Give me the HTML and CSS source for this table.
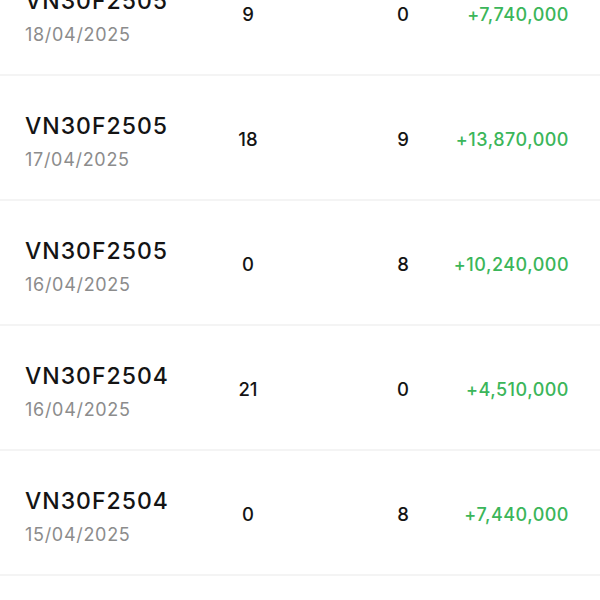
FILE: index.html
```html
<!DOCTYPE html>
<html lang="vi">
<head>
<meta charset="utf-8">
<title>Lịch sử giao dịch</title>
<link rel="stylesheet" href="styles.css">
</head>
<body>
<div class="list">
  <div class="row">
    <div class="name"><div class="code">VN30F2505</div><div class="date">18/04/2025</div></div>
    <div class="qty">9</div>
    <div class="spacer"></div>
    <div class="qty">0</div>
    <div class="amt">+7,740,000</div>
  </div>
  <div class="row">
    <div class="name"><div class="code">VN30F2505</div><div class="date">17/04/2025</div></div>
    <div class="qty">18</div>
    <div class="spacer"></div>
    <div class="qty">9</div>
    <div class="amt">+13,870,000</div>
  </div>
  <div class="row">
    <div class="name"><div class="code">VN30F2505</div><div class="date">16/04/2025</div></div>
    <div class="qty">0</div>
    <div class="spacer"></div>
    <div class="qty">8</div>
    <div class="amt">+10,240,000</div>
  </div>
  <div class="row">
    <div class="name"><div class="code">VN30F2504</div><div class="date">16/04/2025</div></div>
    <div class="qty">21</div>
    <div class="spacer"></div>
    <div class="qty">0</div>
    <div class="amt">+4,510,000</div>
  </div>
  <div class="row">
    <div class="name"><div class="code">VN30F2504</div><div class="date">15/04/2025</div></div>
    <div class="qty">0</div>
    <div class="spacer"></div>
    <div class="qty">8</div>
    <div class="amt">+7,440,000</div>
  </div>
</div>
</body>
</html>
```
FILE: styles.css
```css
html, body {
  margin: 0;
  padding: 0;
  background: #ffffff;
  overflow: hidden;
}
body {
  font-family: Inter, "Noto Sans", sans-serif;
  color: #141414;
}
.list {
  margin-top: -49px;
}
.row {
  display: grid;
  grid-template-columns: 183px 80px 75px 80px 1fr;
  align-items: center;
  height: 123px;
  padding: 0 31px 0 25px;
  border-bottom: 2px solid #f4f4f4;
}
.name {
  display: flex;
  flex-direction: column;
  gap: 10px;
  padding-top: 8px;
}
.code {
  font-size: 23px;
  font-weight: 500;
  line-height: 26px;
  letter-spacing: 1px;
  color: #141414;
}
.date {
  font-size: 18px;
  line-height: 22px;
  letter-spacing: 0.7px;
  color: #8c8c8c;
}
.qty {
  padding-top: 2px;
  text-align: center;
  font-size: 18.5px;
  font-weight: 500;
  color: #141414;
}
.amt {
  padding-top: 3px;
  text-align: right;
  font-size: 18px;
  font-weight: 500;
  letter-spacing: 0.5px;
  color: #3bb65a;
}
```
